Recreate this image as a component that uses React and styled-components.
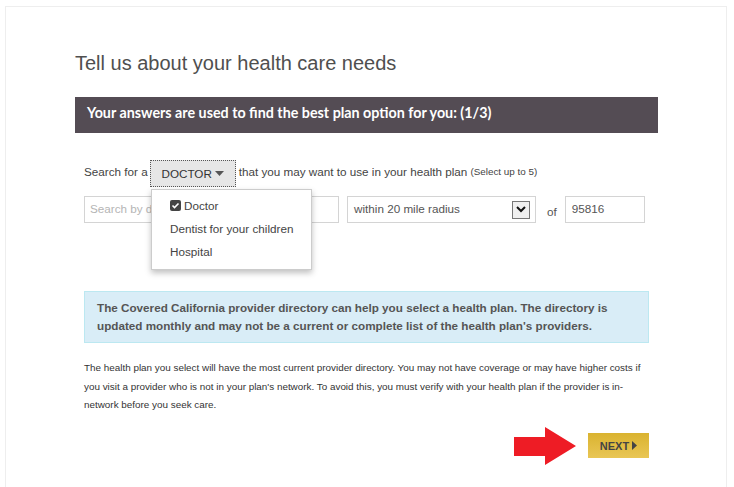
import React from 'react'
import styled, { createGlobalStyle } from 'styled-components'

const Global = createGlobalStyle`
    html, body {
        margin: 0;
        padding: 0;
        background: #fff;
        height: 487px;
        overflow: hidden;
    }
    * {
        box-sizing: border-box;
    }
`

const Page = styled.div`
    padding: 6px 7px 0 5px;
    font-family: "Liberation Sans", Arial, sans-serif;
    color: #444;
`

const Card = styled.div`
    height: 481px;
    border: 1px solid #eee;
    border-bottom: 0;
    padding: 43px 68px 0 69px;
`

const Title = styled.h1`
    margin: 0 0 21px;
    font-size: 20px;
    line-height: 26px;
    font-weight: normal;
    color: #4f4f4f;
`

const Banner = styled.div`
    height: 36px;
    padding-left: 12px;
    background: #544c54;
    color: #fff;
    font-family: Lato, sans-serif;
    font-size: 14.3px;
    font-weight: 700;
    line-height: 32px;
`

const Form = styled.div`
    padding: 0 9px;
`

const SearchRow = styled.div`
    position: relative;
    display: flex;
    align-items: flex-start;
    margin-top: 27px;
    height: 27px;
    font-size: 11.7px;
    line-height: 24px;
    color: #444;
`

const TypeButton = styled.button`
    display: flex;
    align-items: center;
    justify-content: center;
    gap: 3px;
    flex: none;
    width: 86px;
    height: 27px;
    margin: 0 3px 0 2px;
    padding: 0;
    background: #e6e6e6;
    border: 1px dotted #555;
    font: inherit;
    color: #333;
`

const Caret = styled.svg`
    width: 9px;
    height: 5px;
    fill: #555;
`

const Small = styled.small`
    margin-left: 3px;
    font-size: 9.9px;
`

const Menu = styled.ul`
    position: absolute;
    left: 67px;
    top: 29px;
    z-index: 2;
    width: 161px;
    height: 81px;
    margin: 0;
    padding: 4px 0 0 18px;
    list-style: none;
    background: #fff;
    border: 1px solid #ccc;
    box-shadow: 0 3px 6px rgba(0, 0, 0, 0.25);
`

const MenuItem = styled.li`
    display: flex;
    align-items: center;
    gap: 3px;
    height: 23px;
    font-size: 11.7px;
    color: #444;
`

const Fields = styled.div`
    display: flex;
    align-items: center;
    margin-top: 9px;
    height: 27px;
`

const Field = styled.div`
    display: flex;
    align-items: center;
    justify-content: space-between;
    flex: none;
    width: ${(p) => p.$width}px;
    height: 27px;
    margin-left: ${(p) => p.$gap || 0}px;
    padding: 0 ${(p) => p.$right || 6}px 2px ${(p) => p.$left || 6}px;
    border: 1px solid #d4d4d4;
    font-size: 11.7px;
    color: ${(p) => p.$muted ? '#b5b5b5' : '#555'};
`

const SelectArrow = styled.span`
    display: flex;
    align-items: center;
    justify-content: center;
    width: 18px;
    height: 18px;
    margin-top: 2px;
    background: #f0f0f0;
    border: 1px solid #777;
`

const Of = styled.span`
    margin: 4px 8px 0 11px;
    font-size: 11.7px;
    color: #555;
`

const Notice = styled.div`
    margin-top: 68px;
    height: 52px;
    padding: 0 12px;
    background: #d9edf7;
    border: 1px solid #bce8f1;
    font-size: 11.7px;
    font-weight: 700;
    line-height: 18px;
    color: #555;
    display: flex;
    align-items: center;
`

const Legal = styled.p`
    margin: 16px 0 0;
    font-size: 9.9px;
    line-height: 18.5px;
    color: #333;
`

const Actions = styled.div`
    display: flex;
    align-items: center;
    justify-content: flex-end;
    gap: 12px;
    margin-top: 12px;
`

const Arrow = styled.svg`
    width: 62px;
    height: 38px;
    fill: #ee1c25;
`

const NextButton = styled.button`
    display: flex;
    align-items: center;
    justify-content: center;
    gap: 3px;
    width: 61px;
    height: 25px;
    padding: 0;
    border: 0;
    background: linear-gradient(#dab32f, #e9c655);
    font: 700 11px "Liberation Sans", Arial, sans-serif;
    color: #444;
`

const App = () => {
    return (
        <Page>
            <Global />
            <Card>
                <Title>Tell us about your health care needs</Title>
                <Banner>Your answers are used to find the best plan option for you: (1/3)</Banner>
                <Form>
                    <SearchRow>
                        Search for a
                        <TypeButton>
                            DOCTOR
                            <Caret viewBox="0 0 9 5"><path d="M0 0h9L4.5 5z" /></Caret>
                        </TypeButton>
                        that you may want to use in your health plan
                        <Small>(Select up to 5)</Small>
                        <Menu>
                            <MenuItem>
                                <svg width="11" height="11" viewBox="0 0 11 11">
                                    <rect width="11" height="11" rx="2" fill="#444" />
                                    <path d="M2.5 5.5l2 2 4-4" fill="none" stroke="#fff" strokeWidth="1.6" />
                                </svg>
                                Doctor
                            </MenuItem>
                            <MenuItem>Dentist for your children</MenuItem>
                            <MenuItem>Hospital</MenuItem>
                        </Menu>
                    </SearchRow>
                    <Fields>
                        <Field $width={255} $left={5} $muted>Search by doctor</Field>
                        <Field $width={189} $gap={8} $right={5}>
                            within 20 mile radius
                            <SelectArrow>
                                <svg width="10" height="7" viewBox="0 0 10 7">
                                    <path d="M1 1l4 4 4-4" fill="none" stroke="#111" strokeWidth="2" />
                                </svg>
                            </SelectArrow>
                        </Field>
                        <Of>of</Of>
                        <Field $width={80}>95816</Field>
                    </Fields>
                    <Notice>
                        <span>The Covered California provider directory can help you select a health plan. The directory is updated monthly and may not be a current or complete list of the health plan's providers.</span>
                    </Notice>
                    <Legal>
                        The health plan you select will have the most current provider directory. You may not have coverage or may have higher costs if you visit a provider who is not in your plan's network. To avoid this, you must verify with your health plan if the provider is in-network before you seek care.
                    </Legal>
                    <Actions>
                        <Arrow viewBox="0 0 62 38"><path d="M0 10h31V0l31 19-31 19V29H0z" /></Arrow>
                        <NextButton>
                            NEXT
                            <svg width="5" height="9" viewBox="0 0 5 9"><path d="M0 0l5 4.5L0 9z" fill="#444" /></svg>
                        </NextButton>
                    </Actions>
                </Form>
            </Card>
        </Page>
    )
}

export default App
